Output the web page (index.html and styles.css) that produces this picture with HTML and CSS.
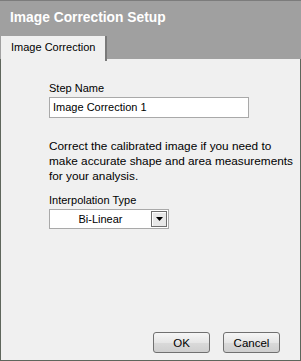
FILE: index.html
```html
<!DOCTYPE html>
<html>
<head>
<meta charset="utf-8">
<link rel="stylesheet" href="styles.css">
</head>
<body>
<div class="dialog">
  <div class="header">Image Correction Setup</div>
  <div class="tabs">
    <div class="tab">Image Correction</div>
  </div>
  <div class="panel">
    <div class="form">
      <label class="label">Step Name</label>
      <div class="input">Image Correction 1</div>
      <p class="desc">Correct the calibrated image if you need to<br>make accurate shape and area measurements<br>for your analysis.</p>
      <label class="label">Interpolation Type</label>
      <div class="select">
        <span class="select-text">Bi-Linear</span>
        <span class="select-btn"><svg width="7" height="4" viewBox="0 0 7 4"><path d="M0 0H7L3.5 4Z" fill="#000"/></svg></span>
      </div>
    </div>
    <div class="buttons">
      <button class="btn">OK</button>
      <button class="btn">Cancel</button>
    </div>
  </div>
</div>
</body>
</html>
```
FILE: styles.css
```css
html, body {
  margin: 0;
  padding: 0;
  background: #a0a0a0;
}
.dialog {
  width: 301px;
  height: 361px;
  display: flex;
  flex-direction: column;
  font-family: "Liberation Sans", Arial, sans-serif;
  font-size: 11px;
  color: #000;
}
.header {
  height: 35px;
  border-top: 1px solid #7c7c7c;
  background: #a0a0a0;
  color: #fff;
  font-weight: bold;
  font-size: 13.8px;
  padding-left: 10px;
  line-height: 34px;
}
.tabs {
  height: 23px;
  background: #a0a0a0;
  display: flex;
  padding-left: 1px;
}
.tab {
  width: 106px;
  background: #f0f0f0;
  padding-left: 10px;
  line-height: 22px;
  box-sizing: border-box;
  border-right: 2px solid #7a7a7a;
  margin-bottom: -2px;
  position: relative;
  z-index: 1;
}
.panel {
  flex: 1;
  background: #f0f0f0;
  border-left: 1px solid #5f665c;
  border-right: 1px solid #5f665c;
  border-bottom: 1px solid #5f665c;
  display: flex;
  flex-direction: column;
  justify-content: space-between;
}
.form {
  padding: 22px 0 0 48px;
  display: flex;
  flex-direction: column;
  align-items: flex-start;
}
.label {
  line-height: 14px;
}
.input {
  margin-top: 2px;
  width: 195px;
  height: 19px;
  border: 1px solid #a9a9a9;
  background: #fff;
  padding-left: 3px;
  line-height: 19px;
}
.desc {
  margin: 21px 0 9px;
  font-size: 11.8px;
  line-height: 15px;
}
.select {
  margin-top: 2px;
  width: 118px;
  height: 18px;
  border: 1px solid #a9a9a9;
  background: #fff;
  display: flex;
  align-items: center;
}
.select-text {
  flex: 1;
  text-align: center;
}
.select-btn {
  width: 14px;
  height: 14px;
  border: 1px solid #6e6e6e;
  background: #e8e8e8;
  margin-right: 1px;
  display: flex;
  align-items: center;
  justify-content: center;
  box-shadow: inset 1px 1px 0 #fff;
}
.buttons {
  display: flex;
  justify-content: flex-end;
  gap: 13px;
  padding: 0 20px 7px 0;
}
.btn {
  width: 57px;
  height: 21px;
  border: 1px solid #707070;
  border-radius: 3px;
  background: linear-gradient(#f6f6f6, #e6e6e6 50%, #dadada 51%, #cfcfcf);
  font-family: "Liberation Sans", Arial, sans-serif;
  font-size: 11.5px;
  color: #000;
  padding: 0;
}
```
